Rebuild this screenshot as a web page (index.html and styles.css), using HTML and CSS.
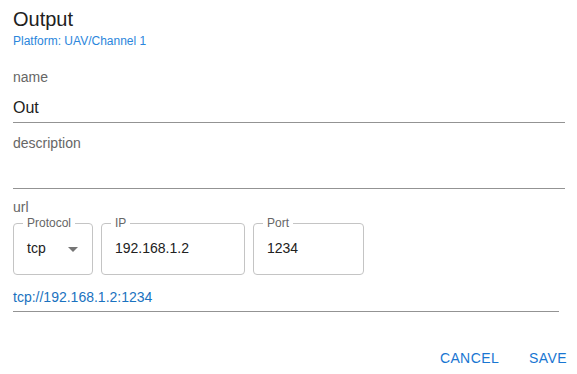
FILE: index.html
```html
<!DOCTYPE html>
<html lang="en">
<head>
    <meta charset="UTF-8">
    <meta name="viewport" content="width=device-width, initial-scale=1.0">
    <title>Output</title>
    <link rel="stylesheet" href="styles.css">
</head>
<body>
    <div class="dialog">
        <h2 class="title">Output</h2>
        <div class="subtitle">Platform: UAV/Channel 1</div>

        <label class="field-label" for="name">name</label>
        <input class="line-input" type="text" id="name" value="Out">

        <label class="field-label gap" for="description">description</label>
        <input class="line-input" type="text" id="description" value="">

        <div class="field-label url-label">url</div>
        <div class="url-row">
            <div class="box box-protocol">
                <span class="box-label">Protocol</span>
                <span class="box-value">tcp</span>
                <svg class="arrow" width="10" height="5" viewBox="0 0 10 5"><path d="M0 0h10L5 5z" fill="#757575"/></svg>
            </div>
            <div class="box box-ip">
                <span class="box-label">IP</span>
                <span class="box-value">192.168.1.2</span>
            </div>
            <div class="box box-port">
                <span class="box-label">Port</span>
                <span class="box-value">1234</span>
            </div>
        </div>
        <div class="url-result">tcp://192.168.1.2:1234</div>

        <div class="actions">
            <button type="button">Cancel</button>
            <button type="button">Save</button>
        </div>
    </div>
</body>
</html>
```

FILE: styles.css
```css
body {
    margin: 0;
    font-family: "Liberation Sans", Arial, sans-serif;
    background: #ffffff;
    color: #212121;
}
.dialog {
    padding: 7px 12px 0 13px;
    display: flex;
    flex-direction: column;
}
.title {
    margin: 0;
    font-size: 20px;
    line-height: 24px;
    font-weight: normal;
    color: #212121;
}
.subtitle {
    margin-top: 3px;
    font-size: 12px;
    line-height: 14px;
    color: #2b86dc;
}
.field-label {
    margin-top: 21px;
    font-size: 14px;
    line-height: 16px;
    color: #666666;
}
.field-label.gap {
    margin-top: 12px;
}
.field-label.url-label {
    margin-top: 10px;
}
.line-input {
    margin: 13px 0 0 0;
    padding: 0 0 5px 0;
    border: none;
    border-bottom: 1px solid #939393;
    font-family: inherit;
    font-size: 16px;
    line-height: 19px;
    height: 19px;
    box-sizing: content-box;
    color: #212121;
    outline: none;
    background: transparent;
}
.url-row {
    margin-top: 8px;
    display: flex;
    gap: 8px;
}
.box {
    position: relative;
    box-sizing: border-box;
    height: 52px;
    border: 1px solid #c4c4c4;
    border-radius: 4px;
    padding: 16px 14px 18px 13px;
    display: flex;
    align-items: flex-start;
}
.box-protocol {
    width: 80px;
    justify-content: space-between;
}
.box-ip {
    width: 144px;
}
.box-port {
    width: 111px;
}
.box-label {
    position: absolute;
    top: -8px;
    left: 9px;
    padding: 0 4px;
    background: #ffffff;
    font-size: 12px;
    line-height: 14px;
    color: #666666;
}
.box-value {
    font-size: 14px;
    line-height: 16px;
    color: #212121;
}
.arrow {
    margin-top: 7px;
}
.url-result {
    margin-top: 12px;
    margin-right: 6px;
    padding-bottom: 4px;
    border-bottom: 1px solid #939393;
    font-size: 14px;
    line-height: 20px;
    color: #1a72c0;
}
.actions {
    margin-top: 28px;
    margin-right: -12px;
    display: flex;
    justify-content: flex-end;
    gap: 10px;
}
.actions button {
    padding: 6px 10px;
    border: none;
    background: none;
    font-family: inherit;
    font-size: 14px;
    line-height: 24px;
    letter-spacing: 0.4px;
    text-transform: uppercase;
    color: #1976d2;
    cursor: pointer;
}
```
